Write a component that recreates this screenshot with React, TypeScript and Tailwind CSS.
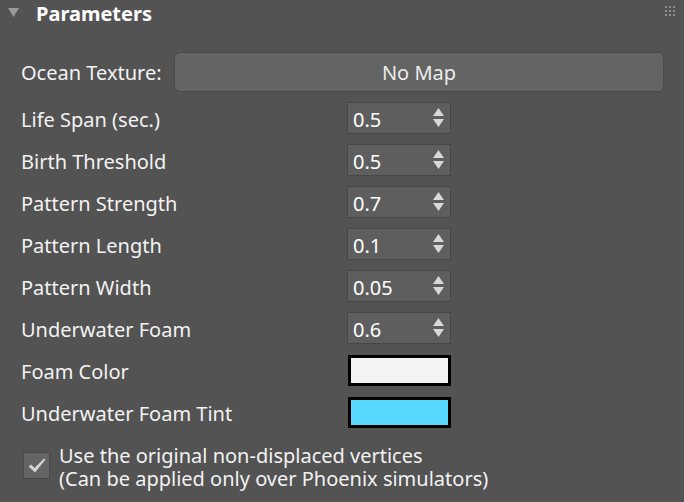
import React from 'react';

const font = { fontFamily: '"Noto Sans", "Open Sans", sans-serif' };

const spinners = [
    { label: 'Life Span (sec.)', value: '0.5' },
    { label: 'Birth Threshold', value: '0.5' },
    { label: 'Pattern Strength', value: '0.7' },
    { label: 'Pattern Length', value: '0.1' },
    { label: 'Pattern Width', value: '0.05' },
    { label: 'Underwater Foam', value: '0.6' },
];

const swatches = [
    { label: 'Foam Color', color: 'bg-[#f3f3f3]' },
    { label: 'Underwater Foam Tint', color: 'bg-[#58d8ff]' },
];

const Spinner = ({ value }: { value: string }) => (
    <div className="w-[104px] h-[32px] bg-[#5e5e5e] border border-[#474747] flex items-center pl-[5px] pr-[6px]">
        <span className="flex-1 text-[20px] text-white leading-none mt-[3px]">{value}</span>
        <svg width="11" height="20" viewBox="0 0 11 20" className="text-[#d8d8d8]">
            <polygon points="5.5,0 11,8 0,8" fill="currentColor" />
            <polygon points="0,11 11,11 5.5,19" fill="currentColor" />
        </svg>
    </div>
);

export default function App() {
    return (
        <div className="w-[684px] h-[502px] bg-[#535353] text-[#f2f2f2] overflow-hidden" style={font}>
            {/* Rollout header */}
            <div className="h-[28px] flex items-center relative">
                <svg width="11" height="9" viewBox="0 0 11 9" className="ml-[8px] mt-[-4px]">
                    <polygon points="0,0 11,0 5.5,9" fill="#9a9a9a" />
                </svg>
                <span className="ml-[17px] text-[20px] font-bold text-white leading-none mt-[-1px]">Parameters</span>
                <div className="absolute right-[9px] top-[6px] grid grid-cols-3 gap-[2px]">
                    {Array.from({ length: 9 }).map((_, i) => (
                        <div key={i} className="w-[2px] h-[2px] bg-[#8e8e8e]" />
                    ))}
                </div>
            </div>

            <div className="pl-[21px] pt-[24px] flex flex-col gap-[10px]">
                <div className="flex items-center h-[40px]">
                    <span className="text-[20px] w-[153px] whitespace-nowrap mt-[2px]">Ocean Texture:</span>
                    <button className="w-[490px] h-[40px] bg-[#646464] border border-[#4a4a4a] rounded-[6px] text-[20px] text-[#ececec] pt-[2px]">
                        No Map
                    </button>
                </div>

                {spinners.map(s => (
                    <div key={s.label} className="flex items-center h-[32px]">
                        <span className="w-[326px] text-[20px] whitespace-nowrap mt-[4px]">{s.label}</span>
                        <Spinner value={s.value} />
                    </div>
                ))}

                {swatches.map(s => (
                    <div key={s.label} className="flex items-center h-[32px]">
                        <span className="w-[327px] text-[20px] whitespace-nowrap mt-[4px]">{s.label}</span>
                        <div className={`w-[103px] h-[31px] border-[3px] border-black ${s.color}`} />
                    </div>
                ))}

                <div className="flex items-start mt-[12px] pl-[2px]">
                    <div className="w-[27px] h-[27px] bg-[#646464] border border-[#4a4a4a] flex items-center justify-center mt-[2px]">
                        <svg width="18" height="15" viewBox="0 0 18 15">
                            <path d="M0.5 8.5 L3 6.5 L6.5 10 L16 0.5 L17.5 1.5 L7 14.5 Z" fill="#d4d4d4" />
                        </svg>
                    </div>
                    <div className="ml-[9px] text-[20px] leading-[23px] mt-[-6px]">
                        <div>Use the original non-displaced vertices</div>
                        <div>(Can be applied only over Phoenix simulators)</div>
                    </div>
                </div>
            </div>
        </div>
    );
}
